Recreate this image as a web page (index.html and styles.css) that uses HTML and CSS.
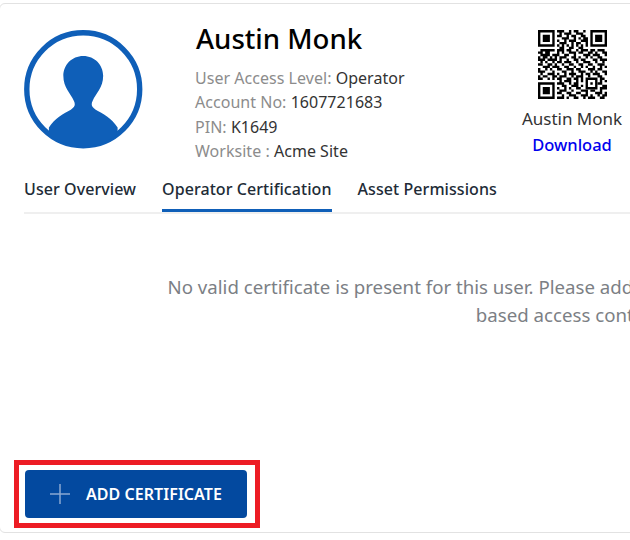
FILE: index.html
```html
<!DOCTYPE html>
<html lang="en">
<head>
<meta charset="utf-8">
<title>Austin Monk</title>
<link rel="stylesheet" href="styles.css">
</head>
<body>
<main class="card">
  <section class="profile">
    <svg class="avatar" viewBox="0 0 119 119" aria-hidden="true">
      <defs><clipPath id="disc"><circle cx="59.5" cy="59.5" r="57"/></clipPath></defs>
      <circle cx="59.5" cy="59.5" r="56.7" fill="#fff" stroke="#0f5fb8" stroke-width="5.4"/>
      <path clip-path="url(#disc)" fill="#0f5fb8" d="M59.5 26C48 26 39.5 35 39.5 46C39.5 58 47 64 50 71C52 75 51 77 47 80C40 84 31 88 25 98L25 119L94 119L94 98C88 88 79 84 72 80C68 77 67 75 69 71C72 64 79.5 58 79.5 46C79.5 35 71 26 59.5 26Z"/>
    </svg>
    <div class="info">
      <h1 class="name">Austin Monk</h1>
      <ul class="facts">
        <li><span class="label">User Access Level:</span> Operator</li>
        <li><span class="label">Account No:</span> 1607721683</li>
        <li><span class="label">PIN:</span> K1649</li>
        <li><span class="label">Worksite :</span> Acme Site</li>
      </ul>
    </div>
    <div class="qr-box">
      <svg class="qr" viewBox="0 0 29 29" aria-hidden="true">
        <path fill="#000" d="M0 0h7v7H0zM22 0h7v7h-7zM0 22h7v7H0zM20 20h5v5h-5z"/>
        <path fill="#fff" d="M1 1h5v5H1zM23 1h5v5h-5zM1 23h5v5H1zM21 21h3v3h-3z"/>
        <path fill="#000" d="M2 2h3v3H2zM24 2h3v3h-3zM2 24h3v3H2zM22 22h1v1h-1z"/>
        <path fill="none" stroke="#000" stroke-width="1" d="M8 .5h3M13 .5h1M15 .5h2M19 .5h1M9 1.500h1M11 1.500h3M16 1.500h3M8 2.500h2M12 2.500h1M14 2.500h2M18 2.500h2M10 3.500h3M15 3.500h1M17 3.500h1M19 3.500h2M8 4.500h1M11 4.500h1M13 4.500h3M18 4.500h3M9 5.500h3M14 5.500h1M16 5.500h2M20 5.500h1M8 6.500h1M10 6.500h1M12 6.500h1M14 6.500h1M16 6.500h1M18 6.500h1M20 6.500h1M9 7.500h2M13 7.500h2M17 7.500h2"/>
        <path fill="none" stroke="#000" stroke-width="1" d="M1 8.500h5M6 8.500h1M8 8.500h3M12 8.500h2M16 8.500h1M18 8.500h3M22 8.500h2M25 8.500h3M0 9.500h2M3 9.500h2M8 9.500h1M10 9.500h1M13 9.500h3M17 9.500h2M21 9.500h2M24 9.500h1M27 9.500h2M1 10.500h4M6 10.500h3M11 10.500h2M15 10.500h1M19 10.500h3M23 10.500h3M28 10.500h1M0 11.500h1M2 11.500h2M5 11.500h1M7 11.500h1M9 11.500h3M14 11.500h2M17 11.500h1M20 11.500h1M22 11.500h1M25 11.500h2M0 12.500h3M4 12.500h4M9 12.500h1M12 12.500h1M15 12.500h2M18 12.500h2M23 12.500h2M26 12.500h3M1 13.500h1M3 13.500h1M6 13.500h1M8 13.500h2M11 13.500h3M16 13.500h1M19 13.500h3M24 13.500h1M27 13.500h1"/>
        <path fill="none" stroke="#000" stroke-width="1" d="M0 14.500h2M4 14.500h2M7 14.500h1M10 14.500h1M13 14.500h2M17 14.500h2M21 14.500h2M25 14.500h3M2 15.500h3M6 15.500h3M11 15.500h2M15 15.500h1M18 15.500h1M20 15.500h1M23 15.500h1M26 15.500h1M28 15.500h1M0 16.500h1M3 16.500h1M5 16.500h1M8 16.500h2M12 16.500h3M16 16.500h2M21 16.500h3M25 16.500h2M0 17.500h3M6 17.500h1M10 17.500h2M14 17.500h1M17 17.500h3M22 17.500h1M24 17.500h1M27 17.500h2M1 18.500h1M4 18.500h3M8 18.500h1M11 18.500h1M13 18.500h3M18 18.500h1M20 18.500h2M23 18.500h3M28 18.500h1M0 19.500h1M2 19.500h2M6 19.500h2M9 19.500h3M14 19.500h1M16 19.500h3M21 19.500h1M25 19.500h2M0 20.500h2M4 20.500h1M6 20.500h1M8 20.500h2M12 20.500h2M15 20.500h2M18 20.500h1M26 20.500h2"/>
        <path fill="none" stroke="#000" stroke-width="1" d="M9 21.500h1M11 21.500h3M16 21.500h1M18 21.500h1M26 21.500h1M28 21.500h1M8 22.500h3M13 22.500h1M15 22.500h2M25 22.500h2M10 23.500h2M14 23.500h3M18 23.500h1M27 23.500h2M8 24.500h1M11 24.500h1M13 24.500h1M16 24.500h2M26 24.500h3M9 25.500h3M14 25.500h1M18 25.500h3M22 25.500h2M26 25.500h1M8 26.500h2M12 26.500h2M16 26.500h2M20 26.500h1M24 26.500h3M28 26.500h1M10 27.500h1M13 27.500h3M18 27.500h3M22 27.500h1M25 27.500h1M27 27.500h2M8 28.500h3M12 28.500h1M15 28.500h2M19 28.500h1M21 28.500h3M26 28.500h2"/>
      </svg>
      <span class="qr-name">Austin Monk</span>
      <a class="download" href="#">Download</a>
    </div>
  </section>
  <nav class="tabs">
    <a class="tab" href="#">User Overview</a>
    <a class="tab active" href="#">Operator Certification</a>
    <a class="tab" href="#">Asset Permissions</a>
  </nav>
  <p class="message">No valid certificate is present for this user. Please add a valid certificate to enable certificate-<br>based access control.</p>
  <div class="actions">
    <button class="add-btn" type="button">
      <svg class="plus" viewBox="0 0 20 20" aria-hidden="true"><path d="M10 0v20M0 10h20" stroke="#8aa8d2" stroke-width="1.5" fill="none"/></svg>
      ADD CERTIFICATE
    </button>
  </div>
</main>
</body>
</html>
```
FILE: styles.css
```css
html, body {
  margin: 0;
  padding: 0;
  width: 630px;
  height: 540px;
  overflow: hidden;
  background: #fff;
}
body {
  font-family: "Noto Sans", sans-serif;
  color: #333;
  padding-top: 3px;
  box-sizing: border-box;
}
.card {
  width: 1200px;
  height: 530px;
  box-sizing: border-box;
  border: 1px solid #e2e2e2;
  border-radius: 6px;
  margin-left: -1px;
  padding: 0 0 0 24px;
  display: flex;
  flex-direction: column;
}
.profile {
  width: 603px;
  height: 169px;
  display: flex;
}
.avatar {
  width: 118.5px;
  height: 118.5px;
  margin-top: 26px;
  flex: none;
}
.info {
  margin-left: 53.5px;
  margin-top: 14px;
  flex: none;
}
.name {
  margin: 0;
  font-size: 27.6px;
  font-weight: 500;
  line-height: 40px;
  color: #000;
}
.facts {
  list-style: none;
  margin: 8px 0 0 -1px;
  padding: 0;
  font-size: 16px;
  line-height: 24.3px;
  letter-spacing: 0.03px;
}
.label { color: #8c8c8c; }
.qr-box {
  margin-left: auto;
  width: 110px;
  flex: none;
  display: flex;
  flex-direction: column;
  align-items: center;
  font-size: 17px;
  padding-top: 26px;
}
.qr {
  width: 69px;
  height: 69px;
  flex: none;
}
.qr-name {
  margin-top: 7px;
  line-height: 26px;
  color: #333;
}
.download {
  font-size: 16.5px;
  line-height: 26px;
  font-weight: 500;
  color: #0000ee;
  text-decoration: none;
}
.tabs {
  width: 606px;
  height: 41px;
  box-sizing: border-box;
  display: flex;
  gap: 26px;
  border-bottom: 2px solid #efefef;
}
.tab {
  font-size: 16px;
  font-weight: 500;
  line-height: 33px;
  letter-spacing: 0.07px;
  color: #212b36;
  text-decoration: none;
  height: 39px;
  box-sizing: border-box;
}
.tab.active {
  border-bottom: 3px solid #0f5fb8;
}
.message {
  width: 1090px;
  margin: 59px 0 0;
  text-align: center;
  font-size: 18.67px;
  line-height: 28px;
  color: #7c7f85;
}
.actions {
  margin: auto 0 4px -10px;
  align-self: flex-start;
  border: 5px solid #ed1c24;
  padding: 5px 8px 5px 6px;
}
.add-btn {
  width: 222px;
  height: 48px;
  display: flex;
  align-items: center;
  gap: 16px;
  padding: 0 0 0 25px;
  border: 0;
  border-radius: 4px;
  background: #03499f;
  color: #fff;
  font: 600 16px "Noto Sans", sans-serif;
  letter-spacing: 0.05px;
}
.plus {
  width: 20px;
  height: 20px;
  flex: none;
}
```
